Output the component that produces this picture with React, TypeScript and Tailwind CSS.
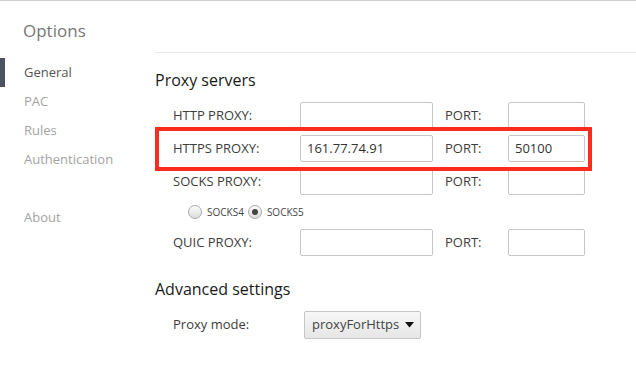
import React from "react";

const font = { fontFamily: '"Open Sans", "Noto Sans", Arial, sans-serif' };

function TextInput({ value, w }: { value?: string; w: string }) {
  return (
    <div
      className={`${w} h-[27px] border border-[#c6c6c6] rounded-[2px] bg-white flex items-center px-[6px] text-[13px] text-[#333]`}
    >
      {value}
    </div>
  );
}

function ProxyRow({ label, value, port }: { label: string; value?: string; port?: string }) {
  return (
    <div className="flex items-center h-[27px] pl-[18px]">
      <div className="w-[127px] text-[13px] text-[#3d3d3d]">{label}</div>
      <TextInput value={value} w="w-[133px]" />
      <div className="w-[75px] pl-[12px] text-[13px] text-[#3d3d3d]">PORT:</div>
      <TextInput value={port} w="w-[77px]" />
    </div>
  );
}

function Radio({ checked }: { checked?: boolean }) {
  return (
    <div className="w-[14px] h-[14px] rounded-full border border-[#a9a9a9] bg-gradient-to-b from-[#fdfdfd] to-[#dcdcdc] flex items-center justify-center">
      {checked && <div className="w-[6px] h-[6px] rounded-full bg-[#444]" />}
    </div>
  );
}

export default function App() {
  return (
    <div className="w-[636px] h-[375px] bg-white border-t border-[#cfcfcf] flex overflow-hidden" style={font}>
      <div className="w-[155px] shrink-0 flex flex-col">
        <div className="pt-[18px] pl-[23px] h-[42px] text-[17px] leading-[24px] text-[#777]">Options</div>
        <div className="mt-[15px] flex flex-col">
          <div className="relative h-[29px] flex items-center pl-[24px] text-[13px] text-[#555]">
            <div className="absolute left-0 top-0 w-[5px] h-[29px] bg-[#4b5361]" />
            General
          </div>
          <div className="h-[29px] flex items-center pl-[24px] text-[13px] text-[#a3a3a3]">PAC</div>
          <div className="h-[29px] flex items-center pl-[24px] text-[13px] text-[#a3a3a3]">Rules</div>
          <div className="h-[29px] flex items-center pl-[24px] text-[13px] text-[#a3a3a3]">Authentication</div>
          <div className="h-[29px] mt-[29px] flex items-center pl-[24px] text-[13px] text-[#a3a3a3]">About</div>
        </div>
      </div>
      <div className="flex-1 flex flex-col">
        <div className="h-[52px] border-b border-[#e8e8e8]" />
        <div className="mt-[15px] h-[24px] text-[16px] leading-[24px] text-[#1a1a1a]">Proxy servers</div>
        <div className="mt-[10px] flex flex-col gap-[6px]">
          <ProxyRow label="HTTP PROXY:" />
          <div className="relative">
            <ProxyRow label="HTTPS PROXY:" value="161.77.74.91" port="50100" />
            <div className="absolute left-0 top-[-8px] w-[437px] h-[44px] border-[4px] border-[#fb2d1f]" />
          </div>
          <ProxyRow label="SOCKS PROXY:" />
        </div>
        <div className="h-[20px] mt-[7px] pl-[33px] flex items-center text-[10px] text-[#444]">
          <Radio />
          <span className="ml-[5px] mr-[4px]">SOCKS4</span>
          <Radio checked />
          <span className="ml-[5px]">SOCKS5</span>
        </div>
        <div className="mt-[7px]">
          <ProxyRow label="QUIC PROXY:" />
        </div>
        <div className="mt-[21px] h-[24px] text-[16px] leading-[24px] text-[#1a1a1a]">Advanced settings</div>
        <div className="mt-[10px] flex items-center pl-[18px] h-[27px]">
          <div className="w-[131px] text-[13px] text-[#3d3d3d]">Proxy mode:</div>
          <div className="w-[117px] h-[28px] border border-[#c6c6c6] rounded-[2px] bg-gradient-to-b from-[#f7f7f7] to-[#e6e6e6] flex items-center justify-between pl-[7px] pr-[6px] text-[13px] text-[#444]">
            <span>proxyForHttps</span>
            <svg width="9" height="6" viewBox="0 0 9 6">
              <path d="M0 0 H9 L4.5 5.5 Z" fill="#111" />
            </svg>
          </div>
        </div>
      </div>
    </div>
  );
}
